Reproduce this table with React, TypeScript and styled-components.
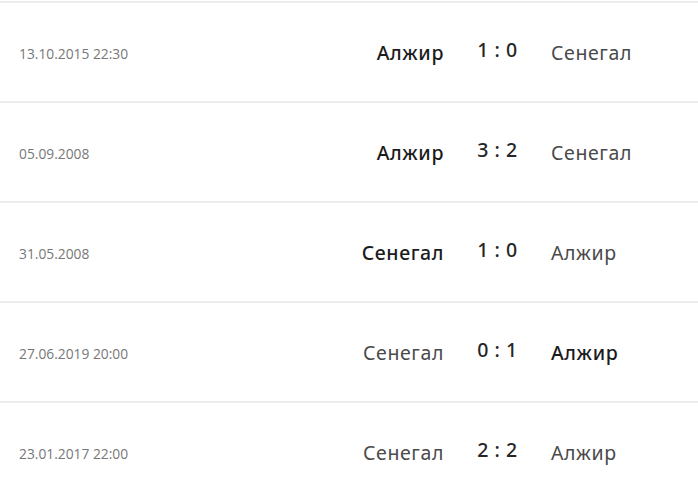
import React from 'react'
import styled, { createGlobalStyle } from 'styled-components'

const GlobalStyle = createGlobalStyle`
    html, body {
        margin: 0;
        padding: 0;
        background: #ffffff;
        font-family: 'Open Sans', 'Noto Sans', sans-serif;
    }
`

interface Match {
    date: string
    home: string
    away: string
    homeGoals: number
    awayGoals: number
}

const matches: Match[] = [
    { date: '13.10.2015 22:30', home: 'Алжир', away: 'Сенегал', homeGoals: 1, awayGoals: 0 },
    { date: '05.09.2008', home: 'Алжир', away: 'Сенегал', homeGoals: 3, awayGoals: 2 },
    { date: '31.05.2008', home: 'Сенегал', away: 'Алжир', homeGoals: 1, awayGoals: 0 },
    { date: '27.06.2019 20:00', home: 'Сенегал', away: 'Алжир', homeGoals: 0, awayGoals: 1 },
    { date: '23.01.2017 22:00', home: 'Сенегал', away: 'Алжир', homeGoals: 2, awayGoals: 2 },
]

const App: React.FC = () => {
    return (
        <>
            <GlobalStyle />
            <StyledList>
                {matches.map((m, i) => (
                    <StyledRow key={i}>
                        <StyledDate>{m.date}</StyledDate>
                        <StyledTeam align={'right'} winner={m.homeGoals > m.awayGoals}>{m.home}</StyledTeam>
                        <StyledScore>{m.homeGoals} : {m.awayGoals}</StyledScore>
                        <StyledTeam align={'left'} winner={m.awayGoals > m.homeGoals}>{m.away}</StyledTeam>
                    </StyledRow>
                ))}
            </StyledList>
        </>
    )
}

const StyledList = styled.div`
    display: flex;
    flex-direction: column;
    padding-top: 1px;
    width: 698px;
`

const StyledRow = styled.div`
    display: grid;
    grid-template-columns: auto 1fr 107px 147px;
    align-items: center;
    height: 98px;
    border-top: 2px solid #ececec;
    padding-left: 19px;
`

const StyledDate = styled.div`
    font-size: 13.8px;
    color: #777777;
    padding-top: 2px;
`

interface StyledTeamProps {
    align: 'left' | 'right'
    winner?: boolean
}

const StyledTeam = styled.div.withConfig({
    shouldForwardProp: (prop) => prop !== 'align' && prop !== 'winner',
})<StyledTeamProps>`
    font-family: 'Noto Sans', 'Open Sans', sans-serif;
    font-size: 19.5px;
    text-align: ${(props) => props.align};
    font-weight: ${(props) => props.winner ? 500 : 400};
    color: ${(props) => props.winner ? '#1c1c1c' : '#4a4a4a'};
    letter-spacing: 0.6px;
`

const StyledScore = styled.div`
    font-family: 'Noto Sans', 'Open Sans', sans-serif;
    font-size: 19.5px;
    font-weight: 500;
    color: #262626;
    text-align: center;
    padding-bottom: 6px;
    letter-spacing: 0.5px;
`

export default App
